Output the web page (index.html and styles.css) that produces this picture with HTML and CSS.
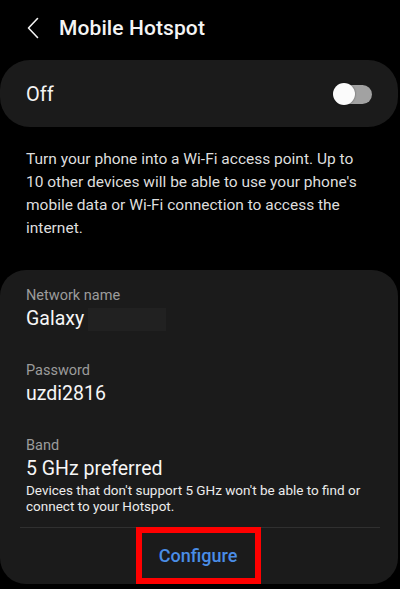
FILE: index.html
```html
<!DOCTYPE html>
<html lang="en">
<head>
    <meta charset="UTF-8">
    <meta name="viewport" content="width=device-width, initial-scale=1.0">
    <title>Mobile Hotspot</title>
    <link rel="stylesheet" href="styles.css">
</head>
<body>
    <header class="topbar">
        <svg class="back" width="12" height="22" viewBox="0 0 12 22">
            <polyline points="10.5,1.5 1.5,11 10.5,20.5" fill="none" stroke="#f2f2f2" stroke-width="1.6" stroke-linecap="round" stroke-linejoin="round"/>
        </svg>
        <h1>Mobile Hotspot</h1>
    </header>

    <div class="switch-card">
        <span class="switch-label">Off</span>
        <span class="toggle">
            <span class="track"></span>
            <span class="knob"></span>
        </span>
    </div>

    <p class="intro">Turn your phone into a Wi-Fi access point. Up to 10 other devices will be able to use your phone's mobile data or Wi-Fi connection to access the internet.</p>

    <div class="settings-card">
        <div class="item">
            <div class="item-label">Network name</div>
            <div class="item-value">Galaxy <span class="hidden-part"></span></div>
        </div>
        <div class="item">
            <div class="item-label">Password</div>
            <div class="item-value">uzdi2816</div>
        </div>
        <div class="item item-last">
            <div class="item-label">Band</div>
            <div class="item-value">5 GHz preferred</div>
            <div class="item-note">Devices that don't support 5 GHz won't be able to find or connect to your Hotspot.</div>
        </div>
        <div class="divider"></div>
        <div class="actions">
            <button class="configure">Configure</button>
        </div>
    </div>
</body>
</html>
```

FILE: styles.css
```css
body {
    margin: 0;
    background-color: #000;
    color: #f4f4f4;
    font-family: Roboto, "Liberation Sans", sans-serif;
}
.topbar {
    height: 56px;
    display: flex;
    align-items: center;
    padding-left: 27px;
}
.back {
    display: block;
}
.topbar h1 {
    margin: 0 0 0 20px;
    font-size: 21px;
    font-weight: 500;
    letter-spacing: 0.1px;
}
.switch-card {
    margin: 4px 2px 0 0;
    height: 67px;
    border-radius: 30px;
    background-color: #1b1b1b;
    display: flex;
    align-items: center;
    justify-content: space-between;
    padding: 0 26px;
}
.switch-label {
    font-size: 20px;
}
.toggle {
    position: relative;
    width: 39px;
    height: 22px;
}
.track {
    position: absolute;
    left: 4px;
    right: 0;
    top: 2px;
    height: 19px;
    border-radius: 10px;
    background-color: #a2a2a2;
}
.knob {
    position: absolute;
    left: 0;
    top: 0;
    width: 22px;
    height: 22px;
    border-radius: 50%;
    background-color: #fbfbfb;
    box-shadow: 0 0 2px rgba(0,0,0,0.5);
}
.intro {
    margin: 21px 0 0;
    padding: 0 26px;
    font-size: 15.5px;
    line-height: 23px;
    color: #dedede;
}
.settings-card {
    margin: 30px 2px 0 0;
    background-color: #1b1b1b;
    border-radius: 26px;
    padding-top: 16px;
}
.item {
    padding: 0 26px;
    margin-bottom: 29px;
}
.item-last {
    margin-bottom: 13px;
}
.item-label {
    font-size: 14.5px;
    line-height: 20px;
    color: #9c9c9c;
}
.item-value {
    font-size: 19.5px;
    line-height: 26px;
    color: #f6f6f6;
}
.hidden-part {
    display: inline-block;
    width: 78px;
    height: 23px;
    margin-left: -1px;
    vertical-align: middle;
    background-color: #212121;
}
.item-note {
    font-size: 13.5px;
    line-height: 16px;
    color: #ececec;
}
.divider {
    height: 1px;
    margin: 0 18px 0 20px;
    background-color: #303030;
}
.actions {
    display: flex;
    justify-content: center;
    padding-right: 2px;
}
.configure {
    width: 125px;
    height: 57px;
    margin-top: -1px;
    border: 6px solid #f00;
    background-color: #1b1b1b;
    color: #4a8de6;
    font-family: Roboto, "Liberation Sans", sans-serif;
    font-size: 18px;
    font-weight: 500;
}
```
